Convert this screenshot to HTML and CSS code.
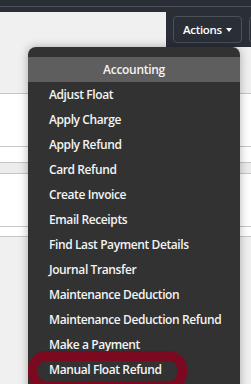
FILE: index.html
```html
<!DOCTYPE html>
<html lang="en">
<head>
  <meta charset="UTF-8">
  <title>Accounts</title>
  <link rel="stylesheet" href="styles.css">
</head>
<body>
  <div class="topbar"></div>

  <div class="page-head">
    <div class="page-title"></div>
    <div class="toolbar">
      <button class="toolbar-btn">Actions <span class="caret"></span></button>
      <button class="toolbar-btn toolbar-btn-cut"></button>
    </div>
  </div>

  <div class="panel panel-lg"></div>
  <div class="panel panel-sm"></div>
  <div class="panel panel-band"></div>
  <div class="panel panel-lg"></div>
  <div class="panel panel-xs"></div>
  <div class="page-rest"></div>

  <div class="dropdown">
    <div class="dropdown-title">Accounting</div>
    <ul class="dropdown-list">
      <li class="dropdown-item">Adjust Float</li>
      <li class="dropdown-item">Apply Charge</li>
      <li class="dropdown-item">Apply Refund</li>
      <li class="dropdown-item">Card Refund</li>
      <li class="dropdown-item">Create Invoice</li>
      <li class="dropdown-item">Email Receipts</li>
      <li class="dropdown-item">Find Last Payment Details</li>
      <li class="dropdown-item">Journal Transfer</li>
      <li class="dropdown-item">Maintenance Deduction</li>
      <li class="dropdown-item">Maintenance Deduction Refund</li>
      <li class="dropdown-item">Make a Payment</li>
      <li class="dropdown-item">Manual Float Refund</li>
    </ul>
  </div>

  <div class="highlight"></div>
</body>
</html>
```

FILE: styles.css
```css
body {
  margin: 0;
  padding: 0;
  height: 384px;
  overflow: hidden;
  position: relative;
  background-color: #efefef;
  font-family: "Open Sans", "Liberation Sans", sans-serif;
}

.topbar {
  height: 12px;
  background-color: #2a2e36;
  background-image: linear-gradient(#2a2e36 6px, #4d515a 6px, #4d515a 7px, #2a2e36 7px);
}

.page-head {
  height: 82px;
  display: flex;
  align-items: flex-start;
  background-color: #f0f0f0;
  border-bottom: 1px solid #c6c6c6;
  box-sizing: border-box;
}

.page-title {
  flex: 1;
}

.toolbar {
  width: 85px;
  height: 35px;
  background-color: #2a2e36;
  display: flex;
  align-items: flex-start;
  gap: 7px;
  padding: 4px 0 0 7px;
  box-sizing: border-box;
  overflow: hidden;
}

.toolbar-btn {
  flex: none;
  height: 27px;
  padding: 0 9px;
  border: 1px solid #4b5059;
  border-radius: 4px;
  background-color: #2a2e36;
  color: #fff;
  font-family: inherit;
  font-size: 11.5px;
  font-weight: 600;
  letter-spacing: -0.3px;
  display: flex;
  align-items: center;
}

.toolbar-btn-cut {
  width: 20px;
}

.caret {
  display: inline-block;
  margin-left: 4px;
  border-left: 3.5px solid transparent;
  border-right: 3.5px solid transparent;
  border-top: 4px solid #fff;
}

.panel {
  background-color: #fff;
  border-bottom: 1px solid #c6c6c6;
}

.panel-lg {
  height: 52px;
}

.panel-sm {
  height: 15px;
}

.panel-band {
  height: 10px;
  background-color: #ececec;
}

.panel-xs {
  height: 9px;
}

.page-rest {
  height: 150px;
  background-color: #f0f0f0;
}

/* dropdown menu over the page */
.dropdown {
  position: absolute;
  top: 47px;
  left: 28px;
  width: 212px;
  padding: 10px 0 20px;
  background-color: #323232;
  border-radius: 8px 8px 0 0;
  box-shadow: 0 0 10px rgba(0, 0, 0, .3);
  color: #f4f4f4;
}

.dropdown-title {
  height: 25px;
  line-height: 25px;
  text-align: center;
  background-color: #5e5e5e;
  font-size: 12px;
  font-weight: 600;
  letter-spacing: -0.3px;
}

.dropdown-list {
  list-style: none;
  margin: 0;
  padding: 0;
}

.dropdown-item {
  height: 25px;
  line-height: 25px;
  padding-left: 21px;
  font-size: 12px;
  font-weight: 600;
  letter-spacing: -0.4px;
}

/* red marker drawn over the screenshot */
.highlight {
  position: absolute;
  top: 351px;
  left: 28px;
  width: 159px;
  height: 40px;
  border: 10px solid #7b0a20;
  border-radius: 18px;
  box-sizing: border-box;
}
```
